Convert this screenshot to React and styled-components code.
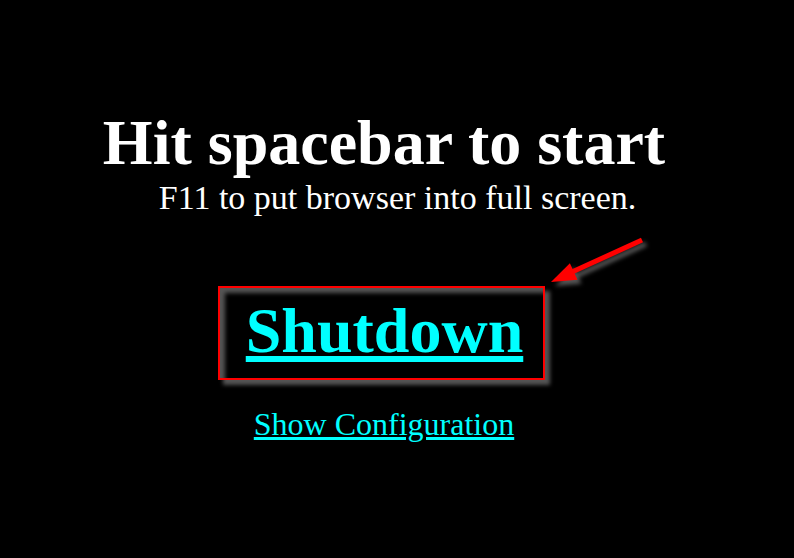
import React from "react";
import styled, { createGlobalStyle } from "styled-components";

const GlobalStyle = createGlobalStyle`
  html, body {
    margin: 0;
    padding: 0;
    background: #000;
  }

  body {
    font-family: "Liberation Serif", "Times New Roman", serif;
  }
`;

const Page = styled.div`
  width: 794px;
  height: 558px;
  background: #000;
  box-sizing: border-box;
  padding: 111px 26px 0 0;
  display: flex;
  flex-direction: column;
  align-items: center;
`;

const Title = styled.h1`
  margin: 0;
  color: #fff;
  font-size: 64px;
  font-weight: bold;
  line-height: 1;
`;

const Hint = styled.div`
  margin: 6px 0 0;
  padding-left: 27px;
  color: #fff;
  font-size: 34px;
  line-height: 1;
`;

const ButtonWrap = styled.div`
  position: relative;
  margin: 71px 5px 0 0;
`;

const ShutdownBox = styled.div`
  border: 2px solid #ff0000;
  padding: 11px 20px 15px 26px;
  box-shadow: 5px 5px 4px #555, inset 5px 5px 4px #555;
`;

const Link = styled.a`
  color: #00ffff;
  text-decoration: underline;
  font-size: ${(p) => p.size}px;
  font-weight: ${(p) => (p.bold ? "bold" : "normal")};
  line-height: 1;
  cursor: pointer;
  display: block;
`;

const ConfigRow = styled.div`
  margin-top: 28px;
`;

const Arrow = styled.svg`
  position: absolute;
  left: 330px;
  top: -52px;
  overflow: visible;
  filter: drop-shadow(4px 4px 2px #555);
`;

const PointerArrow = () => (
  <Arrow width="100" height="55" viewBox="0 0 100 55">
    <line x1="94" y1="6" x2="24" y2="38" stroke="#ff0000" strokeWidth="5" />
    <polygon points="3,48 29.5,45.7 21.9,29.3" fill="#ff0000" />
  </Arrow>
);

export default function App() {
  return (
    <>
      <GlobalStyle />
      <Page>
        <Title>Hit spacebar to start</Title>
        <Hint>F11 to put browser into full screen.</Hint>

        <ButtonWrap>
          <ShutdownBox>
            <Link size={64} bold>
              Shutdown
            </Link>
          </ShutdownBox>
          <PointerArrow />
        </ButtonWrap>

        <ConfigRow>
          <Link size={32}>Show Configuration</Link>
        </ConfigRow>
      </Page>
    </>
  );
}
